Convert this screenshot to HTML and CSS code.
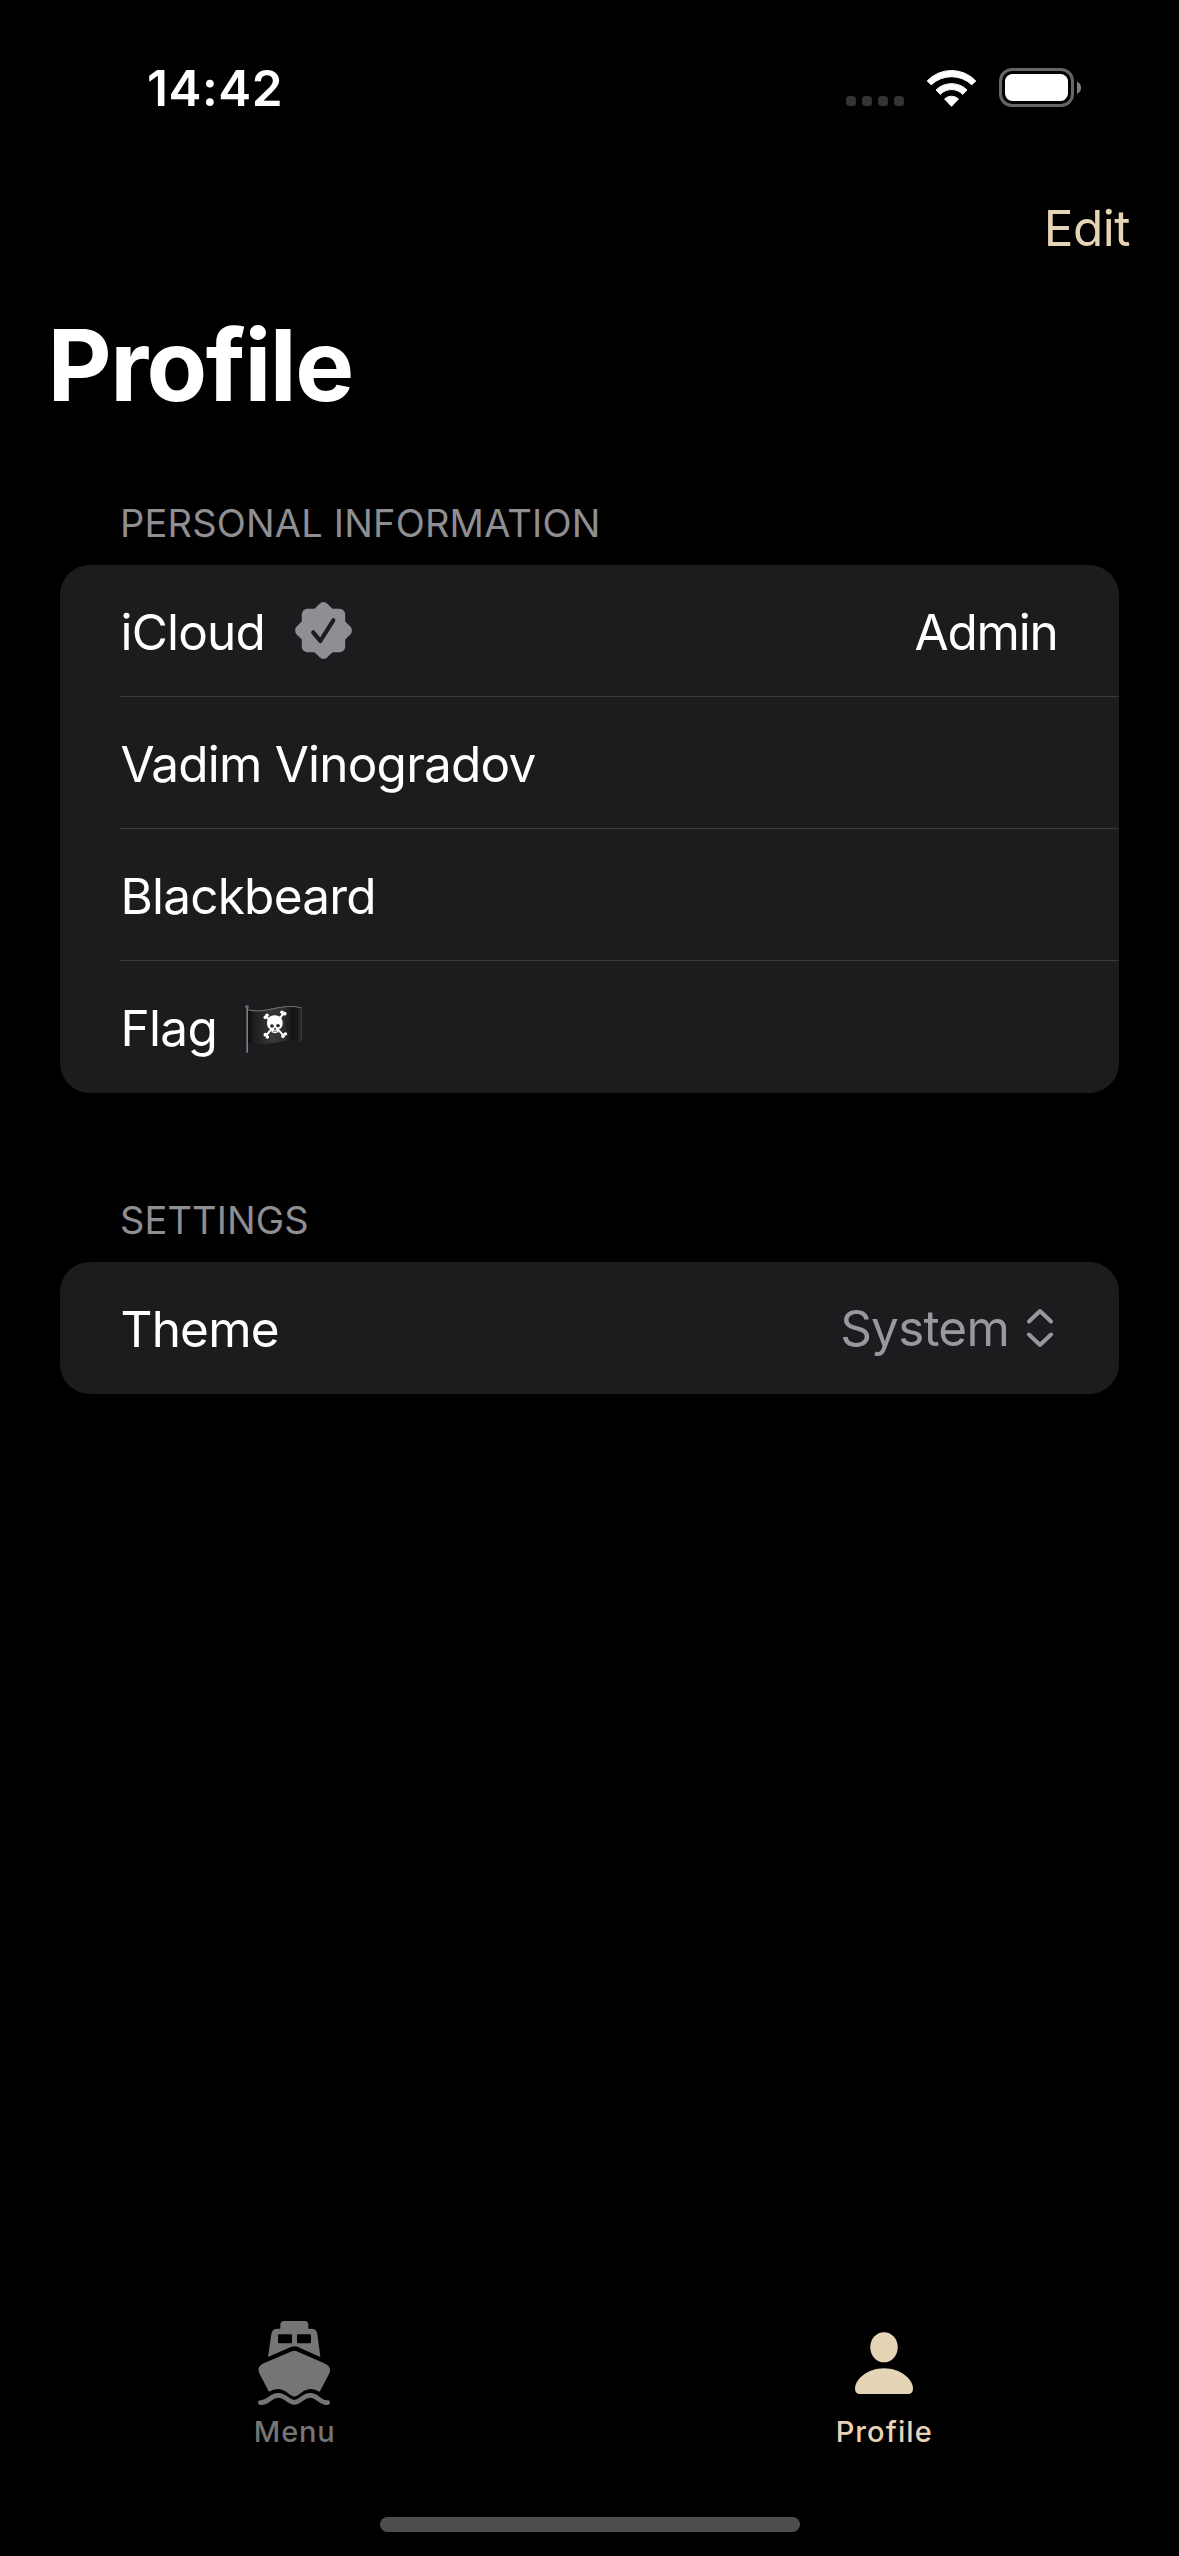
FILE: index.html
```html
<!DOCTYPE html>
<html lang="en">
<head>
<meta charset="utf-8">
<title>Profile</title>
<link rel="stylesheet" href="styles.css">
</head>
<body>
<div class="screen">
  <header class="status-bar">
    <time class="clock">14:42</time>
    <div class="status-icons">
      <div class="signal"><i></i><i></i><i></i><i></i></div>
      <svg class="wifi" viewBox="319 86 151 112">
        <g fill="#fff" stroke="#fff" stroke-width="3" stroke-linejoin="round">
          <path d="M321 119A101.500 101.500 0 0 1 468 119L456 131A89 89 0 0 0 333 131Z"/>
          <path d="M347.500 146.500A67 67 0 0 1 441.500 146.500L428.500 160A46.500 46.500 0 0 0 360.500 160Z"/>
          <path d="M373.500 173.500A31 31 0 0 1 415.500 173.500L394.500 196Z"/>
        </g>
      </svg>
      <svg class="battery" viewBox="0 0 83 40">
        <rect x="1.500" y="1.500" width="72" height="36" rx="11.500" fill="none" stroke="#666" stroke-width="3"/>
        <rect x="6" y="6" width="63" height="27" rx="7.500" fill="#fff"/>
        <path d="M78 13.500Q82 15.500 82 19.800T78 26Z" fill="#808080"/>
      </svg>
    </div>
  </header>

  <nav class="nav-bar"><a class="edit">Edit</a></nav>
  <h1 class="title">Profile</h1>

  <section class="group">
    <h2 class="group-title personal">PERSONAL INFORMATION</h2>
    <ul class="card">
      <li class="row">
        <span>iCloud</span>
        <svg class="badge" viewBox="-28.500 -28.500 57 57">
          <g fill="#8e8e93">
            <rect x="-21.700" y="-21.700" width="43.400" height="43.400" rx="5.500"/>
            <rect x="-21.700" y="-21.700" width="43.400" height="43.400" rx="5.500" transform="rotate(45)"/>
          </g>
          <path d="M-10.300 1.800L-3.200 10.500L9.800 -10.200" fill="none" stroke="#1c1c1e" stroke-width="4.200" stroke-linecap="round" stroke-linejoin="round"/>
        </svg>
        <span class="value">Admin</span>
      </li>
      <li class="row"><span>Vadim Vinogradov</span></li>
      <li class="row"><span>Blackbeard</span></li>
      <li class="row">
        <span class="flag-label">Flag</span>
        <svg class="flag" viewBox="45 80 171 147">
          <defs>
            <linearGradient id="cloth" x1="0" x2="1" y1="0" y2="0">
              <stop offset="0" stop-color="#0c0c0c"/>
              <stop offset=".12" stop-color="#1e1e1e"/>
              <stop offset=".45" stop-color="#373737"/>
              <stop offset=".65" stop-color="#303030"/>
              <stop offset=".84" stop-color="#111"/>
              <stop offset=".93" stop-color="#1a1a1a"/>
              <stop offset="1" stop-color="#333"/>
            </linearGradient>
          </defs>
          <path d="M54 93C78 100 102 96 130 90S188 80 215 88V189C188 183 160 188 130 194S80 199 54 193Z" fill="url(#cloth)"/>
          <path d="M54 94C78 101 102 97 130 91S188 81 215 89" fill="none" stroke="#777" stroke-width="3"/>
          <path d="M214.500 90V187" stroke="#484848" stroke-width="1.500"/>
          <path d="M51.500 86V223" stroke="#8797a5" stroke-width="4"/>
          <ellipse cx="51" cy="85" rx="5.500" ry="4" fill="#5c7284"/>
          <g fill="#fff" stroke="#fff">
            <path d="M109 115L160 171M160 106L109 171" stroke-width="6"/>
            <g stroke="none">
              <circle cx="106" cy="117" r="5.500"/><circle cx="111" cy="111" r="5.500"/>
              <circle cx="156" cy="102" r="5.500"/><circle cx="164" cy="106" r="5.500"/>
              <circle cx="106" cy="169" r="5.500"/><circle cx="112" cy="176" r="5.500"/>
              <circle cx="166" cy="167" r="5.500"/><circle cx="159" cy="174" r="5.500"/>
              <path d="M111 134C111 119 120 111 134 111S158 119 158 133C158 145 154 150 147 152L145 162Q135 167 125 162L123 153C115 150 111 145 111 134Z"/>
            </g>
          </g>
          <g fill="#262626">
            <ellipse cx="126" cy="143" rx="5.500" ry="5"/>
            <ellipse cx="144" cy="142" rx="5.500" ry="5"/>
            <path d="M135 147L131.500 154H138.500Z"/>
            <path d="M129 157.500H141V159.500H129Z"/>
          </g>
        </svg>
      </li>
    </ul>
  </section>

  <section class="group settings">
    <h2 class="group-title">SETTINGS</h2>
    <ul class="card">
      <li class="row">
        <span>Theme</span>
        <span class="value picker">System
          <svg class="chevrons" viewBox="0 0 26 38"><path d="M2 12.500L13 2L24 12.500M2 25.500L13 36L24 25.500" fill="none" stroke="#98989e" stroke-width="4" stroke-linecap="round" stroke-linejoin="round"/></svg>
        </span>
      </li>
    </ul>
  </section>

  <footer class="tab-bar">
    <div class="tabs">
      <a class="tab">
        <svg class="ship" viewBox="84 63 216 252">
          <g fill="#757575">
            <path fill-rule="evenodd" d="M151 86V74Q151 63 162 63H224Q235 63 235 74V86H243Q260 86 262 102L271 171L202 140.500Q193 137 184 140.500L114 171L124 102Q126 86 143 86ZM147 103Q144 103 144 106V127Q144 130 147 130H183Q186 130 186 127V106Q186 103 183 103ZM204 103Q201 103 201 106V127Q201 130 204 130H240Q243 130 243 127V106Q243 103 240 103Z"/>
            <path d="M184 154.500Q193 150 202 154.500L286 191Q304 200 299 218L269 275Q240 258 214 278Q204 287 193 290Q182 287 172 278Q146 258 117 275L87 218Q81 200 98 191Z"/>
          </g>
          <path d="M91 308C118 309 120 286 144 286S174 307 193 307S217 286 241 286S267 309 293 308" fill="none" stroke="#757575" stroke-width="14" stroke-linecap="round"/>
        </svg>
        <span class="menu-label">Menu</span>
      </a>
      <a class="tab active">
        <svg class="person" viewBox="165 97 173 185">
          <g fill="#e6d4b7">
            <ellipse cx="251.500" cy="142.500" rx="41" ry="45"/>
            <path d="M181 282Q165 282 165 266C165 238 202 205 251.500 205S338 238 338 266Q338 282 322 282Z"/>
          </g>
        </svg>
        <span class="profile-label">Profile</span>
      </a>
    </div>
    <div class="home-indicator"></div>
  </footer>
</div>
</body>
</html>
```
FILE: styles.css
```css
* { box-sizing: border-box; }

body {
  margin: 0;
  background: #000;
  color: #fff;
  font-family: Inter, "Liberation Sans", sans-serif;
  font-size: 49.5px;
  letter-spacing: -0.8px;
}

svg { display: block; flex: none; }

.screen {
  display: flex;
  flex-direction: column;
  width: 1179px;
  height: 2556px;
}

.status-bar {
  display: flex;
  justify-content: space-between;
  align-items: center;
  height: 176px;
  padding: 0 97px 0 147px;
}

.clock {
  font-weight: 600;
  letter-spacing: 0.5px;
}

.status-icons { display: flex; align-items: center; }

.signal {
  display: flex;
  gap: 6px;
  margin: 26px 22px 0 0;
}

.signal i {
  width: 10px;
  height: 10px;
  border-radius: 3.5px;
  background: #333;
}

.wifi { width: 51px; height: 37px; margin-right: 22px; }
.battery { width: 83px; height: 40px; }

.nav-bar {
  display: flex;
  justify-content: flex-end;
  align-items: center;
  height: 104px;
  padding-right: 49px;
}

.edit { color: #e6d4b7; letter-spacing: -0.5px; }

.title {
  height: 170px;
  margin: 0;
  padding-left: 47.5px;
  font-size: 99px;
  font-weight: 700;
  line-height: 170px;
  letter-spacing: -1.5px;
}

.group { padding: 50px 60px 0; }
.settings { padding-top: 104px; }

.group-title {
  margin: 0 0 19px;
  padding-left: 60px;
  color: #8e8e93;
  font-size: 38px;
  font-weight: 400;
  line-height: 46px;
  letter-spacing: 0.1px;
}

.personal { letter-spacing: 0.2px; }

.card {
  margin: 0;
  padding: 0 0 0 60px;
  list-style: none;
  border-radius: 30px;
  background: #1c1c1e;
}

.row {
  display: flex;
  align-items: center;
  height: 132px;
  padding: 2px 60px 0 0.5px;
  border-bottom: 1px solid #3b3b3d;
}

.row:last-child { border-bottom: 0; padding-bottom: 1px; }

.badge { width: 57px; height: 57px; margin: -2px 0 0 30px; }
.flag-label { letter-spacing: -0.7px; }
.flag { width: 57px; height: 49px; margin: 4px 0 0 28px; }

.value { margin-left: auto; margin-right: 1.5px; letter-spacing: -1.2px; }

.picker {
  display: flex;
  align-items: center;
  gap: 18px;
  margin: -2px 6px 0 auto;
  color: #98989e;
  letter-spacing: -0.8px;
}

.chevrons { width: 26px; height: 38px; }

.tab-bar {
  display: flex;
  flex-direction: column;
  justify-content: space-between;
  align-items: center;
  height: 235px;
  margin-top: auto;
  padding-bottom: 24px;
}

.tabs { display: flex; width: 100%; }

.tab {
  display: flex;
  flex: 1;
  flex-direction: column;
  align-items: center;
  color: #757575;
  font-size: 29px;
  font-weight: 460;
  line-height: 36px;
}

.active { color: #e6d4b7; }

.ship { width: 72px; height: 84px; margin: 0 1px 9px 0; }
.person { width: 58px; height: 62px; margin: 11px 0 20px; }
.menu-label { letter-spacing: 0.85px; }
.profile-label { letter-spacing: 1.1px; }

.home-indicator {
  width: 420px;
  height: 15px;
  border-radius: 8px;
  background: #4d4d4d;
}
```
